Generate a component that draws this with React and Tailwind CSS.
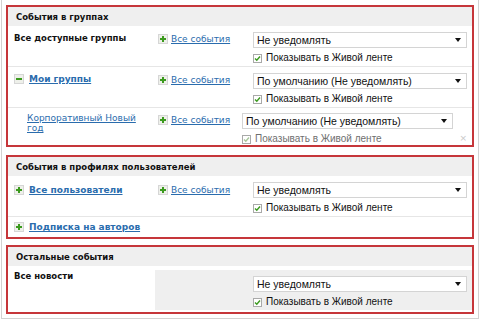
import { Fragment } from 'react'

const FONT = "font-['DejaVu_Sans',Verdana,sans-serif]"
const UI_FONT = "font-['Liberation_Sans',Arial,sans-serif]"

function Toggle({ minus = false }) {
  return (
    <span className="inline-flex w-[10px] h-[10px] shrink-0 items-center justify-center border border-[#d6d6d6] bg-[#eef0ea]">
      <svg width="8" height="8" viewBox="0 0 8 8">
        <rect x="1" y="3" width="6" height="2" fill="#3b9a1e" />
        {!minus && <rect x="3" y="1" width="2" height="6" fill="#3b9a1e" />}
      </svg>
    </span>
  )
}

function Select({ value }) {
  return (
    <div className={`${UI_FONT} flex items-center justify-between h-[16px] border border-[#d4d4d4] bg-white pl-[3px] pr-[5px] text-[10.5px] text-[#111]`}>
      <span className="leading-none">{value}</span>
      <svg width="6" height="4" viewBox="0 0 6 4">
        <path d="M0 0h6L3 4z" fill="#111" />
      </svg>
    </div>
  )
}

function Check({ disabled = false }) {
  return (
    <label className={`${UI_FONT} flex items-center gap-[4px] h-[12px] text-[10px] ${disabled ? 'text-[#6f6f6f]' : 'text-[#111]'}`}>
      <span className="inline-flex w-[9px] h-[9px] items-center justify-center border border-[#a9a9a9] bg-white">
        <svg width="7" height="7" viewBox="0 0 7 7">
          <path d="M1 3.5l1.8 1.8L6 1.5" stroke={disabled ? '#a8c79c' : '#3b9a1e'} strokeWidth="1.4" fill="none" />
        </svg>
      </span>
      Показывать в Живой ленте
    </label>
  )
}

function EventLink() {
  return (
    <div className="flex items-center gap-[3px]">
      <Toggle />
      <a className="text-[#2a6cad] underline leading-[12px]">Все события</a>
    </div>
  )
}

function Settings({ value, disabled = false }) {
  return (
    <div className="flex flex-col gap-[4px]">
      <Select value={value} />
      <Check disabled={disabled} />
    </div>
  )
}

function Section({ title, children, className = '' }) {
  return (
    <section className={`border-2 border-[#c6363a] ${className}`}>
      <div className="h-[19px] flex items-center pl-[8px] bg-[#efefef] font-bold text-[#111] text-[8.5px]">{title}</div>
      {children}
    </section>
  )
}

const GROUP_ROWS = [
  { label: <b className="text-[#111] text-[8.5px]">Все доступные группы</b>, value: 'Не уведомлять' },
  {
    label: (
      <span className="flex items-center gap-[5px]">
        <Toggle minus />
        <a className="font-bold text-[#2a6cad] underline">Мои группы</a>
      </span>
    ),
    value: 'По умолчанию (Не уведомлять)',
  },
]

export default function App() {
  return (
    <div className={`${FONT} w-[480px] h-[319px] bg-white text-[9px] leading-[12px] overflow-hidden`}>
      <div className="mx-[1px] border border-t-0 border-[#d2d2d2] px-[4px] pt-[5px] pb-[4px]">

        {/* Группы */}
        <Section title="События в группах">
          {GROUP_ROWS.map((row, i) => (
            <div key={i} className="grid grid-cols-[147px_94px_1fr] border-b border-[#e6e6e6] pt-[6px] pb-[2px]">
              <div className="pl-[6px]">{row.label}</div>
              <div className="pl-[3px] pt-[1px]"><EventLink /></div>
              <div className="pl-[4px] pr-[5px]"><Settings value={row.value} /></div>
            </div>
          ))}
          <div className="grid grid-cols-[147px_94px_1fr] pt-[5px]">
            <div className="pl-[19px]">
              <a className="text-[#2a6cad] underline leading-[10px] block">Корпоративный Новый год</a>
            </div>
            <div className="pl-[3px] pt-[1px]"><EventLink /></div>
            <div className="flex items-end -ml-[7px] pr-[5px] gap-[6px]">
              <div className="flex-1"><Settings value="По умолчанию (Не уведомлять)" disabled /></div>
              <span className="text-[#c8c8c8] text-[9px] leading-[14px]">×</span>
            </div>
          </div>
        </Section>

        {/* Пользователи */}
        <Section title="События в профилях пользователей" className="mt-[8px]">
          <div className="grid grid-cols-[147px_94px_1fr] border-b border-[#e6e6e6] pt-[6px] pb-[2px]">
            <div className="pl-[6px] pt-[2px]">
              <span className="flex items-center gap-[5px]">
                <Toggle />
                <a className="font-bold text-[#2a6cad] underline">Все пользователи</a>
              </span>
            </div>
            <div className="pl-[3px] pt-[2px]"><EventLink /></div>
            <div className="pl-[4px] pr-[5px]"><Settings value="Не уведомлять" /></div>
          </div>
          <div className="pl-[6px] py-[4px] flex items-center gap-[5px]">
            <Toggle />
            <a className="font-bold text-[#2a6cad] underline">Подписка на авторов</a>
          </div>
        </Section>

        {/* Остальные */}
        <Section title="Остальные события" className="mt-[6px]">
          <div className="grid grid-cols-[147px_1fr] pt-[4px] pb-[2px]">
            <div className="pl-[6px]">
              <b className="text-[#111] text-[8.5px]">Все новости</b>
            </div>
            <div className="grid grid-cols-[94px_1fr] bg-[#efefef] pt-[6px] pb-[2px]">
              <div />
              <div className="pl-[4px] pr-[5px]"><Settings value="Не уведомлять" /></div>
            </div>
          </div>
        </Section>
      </div>
    </div>
  )
}
